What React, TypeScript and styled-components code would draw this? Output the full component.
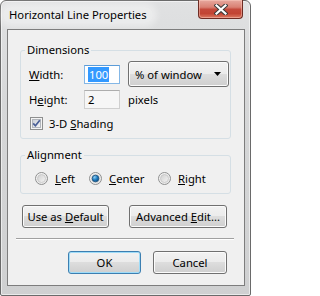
import React from "react";
import styled, { createGlobalStyle, css } from "styled-components";

const GlobalStyle = createGlobalStyle`
  html, body {
    margin: 0;
    padding: 0;
    background: #ffffff;
  }
  body {
    font-family: "Noto Sans", "Segoe UI", sans-serif;
    font-size: 11.25px;
    color: #000;
  }
  * {
    box-sizing: border-box;
  }
`;

const CheckBoxIcon = () => (
  <svg width="13" height="13" viewBox="0 0 13 13">
    <defs>
      <linearGradient id="cbInner" x1="0" y1="0" x2="1" y2="1">
        <stop offset="0" stopColor="#cbcfd5" />
        <stop offset="1" stopColor="#f7f7f7" />
      </linearGradient>
    </defs>
    <rect x="0.5" y="0.5" width="12" height="12" fill="#f4f4f4" stroke="#8e8f8f" />
    <rect x="2.5" y="2.5" width="8" height="8" fill="url(#cbInner)" stroke="#b2b6bc" />
    <path d="M3.2 6.4 L5.4 8.8 L9.8 3.2" fill="none" stroke="#4a5f97" strokeWidth="1.7" />
  </svg>
);

const RadioIcon = ({ checked }: { checked?: boolean }) => (
  <svg width="13" height="13" viewBox="0 0 13 13">
    <defs>
      <linearGradient id="rdOuter" x1="0" y1="0" x2="1" y2="1">
        <stop offset="0" stopColor="#f6f6f6" />
        <stop offset="1" stopColor="#e6e6e6" />
      </linearGradient>
      <linearGradient id="rdInner" x1="0" y1="0" x2="1" y2="1">
        <stop offset="0" stopColor="#cfcfcf" />
        <stop offset="1" stopColor="#f5f5f5" />
      </linearGradient>
      <radialGradient id="rdDot" cx="0.35" cy="0.3" r="0.75">
        <stop offset="0" stopColor="#8fd0f5" />
        <stop offset="0.55" stopColor="#1f7cc0" />
        <stop offset="1" stopColor="#0c4f82" />
      </radialGradient>
    </defs>
    <circle cx="6.5" cy="6.5" r="6" fill="url(#rdOuter)" stroke="#8e8f8f" />
    <circle cx="6.5" cy="6.5" r="4" fill="url(#rdInner)" stroke="#c4c4c4" strokeWidth="0.8" />
    {checked && <circle cx="6.5" cy="6.5" r="3.3" fill="url(#rdDot)" stroke="#19517f" strokeWidth="0.8" />}
  </svg>
);

const App = () => {
  return (
    <>
      <GlobalStyle />
      <Window>
        <TitleBar>
          <TitleText>Horizontal Line Properties</TitleText>
          <CloseButton>
            <svg width="14" height="11" viewBox="0 0 14 11">
              <path d="M2.5 1.5 L11.5 9.5 M11.5 1.5 L2.5 9.5" stroke="#3a3a3a" strokeWidth="4.2" strokeLinecap="square" />
              <path d="M2.5 1.5 L11.5 9.5 M11.5 1.5 L2.5 9.5" stroke="#ffffff" strokeWidth="2.2" strokeLinecap="square" />
            </svg>
          </CloseButton>
        </TitleBar>

        <Client>
          <Group $top={13}>
            <Legend>Dimensions</Legend>
            <DimGrid>
              <FieldLabel>
                <Key>W</Key>idth:
              </FieldLabel>
              <TextBox $focused>
                <Selection>100</Selection>
              </TextBox>
              <Combo>
                <span>% of window</span>
                <svg width="7" height="4" viewBox="0 0 7 4">
                  <polygon points="0,0 7,0 3.5,4" fill="#000" />
                </svg>
              </Combo>
              <FieldLabel>
                H<Key>e</Key>ight:
              </FieldLabel>
              <TextBox>2</TextBox>
              <FieldLabel>pixels</FieldLabel>
            </DimGrid>
            <CheckRow>
              <CheckBoxIcon />
              <span>
                3-D <Key>S</Key>hading
              </span>
            </CheckRow>
          </Group>

          <Group $top={9} $bottom={9} $padTop={9}>
            <Legend>Alignment</Legend>
            <RadioRow>
              <RadioItem>
                <RadioIcon />
                <span>
                  <Key>L</Key>eft
                </span>
              </RadioItem>
              <RadioItem>
                <RadioIcon checked />
                <span>
                  <Key>C</Key>enter
                </span>
              </RadioItem>
              <RadioItem>
                <RadioIcon />
                <span>
                  <Key>R</Key>ight
                </span>
              </RadioItem>
            </RadioRow>
          </Group>

          <ButtonRow>
            <Button $w={87}>
              <span>
                Use as <Key>D</Key>efault
              </span>
            </Button>
            <Button $w={98}>
              <span>
                Advanced <Key>E</Key>dit...
              </span>
            </Button>
          </ButtonRow>

          <Separator />

          <FooterRow>
            <Button $w={73} $default>
              <span>OK</span>
            </Button>
            <Button $w={74}>
              <span>Cancel</span>
            </Button>
          </FooterRow>
        </Client>
      </Window>
    </>
  );
};

export default App;

const Window = styled.div`
  display: flex;
  flex-direction: column;

  width: 251px;
  height: 296px;
  padding: 0 5px 9px 6px;

  border: 1px solid #6a6a6a;
  border-radius: 6px 6px 2px 2px;
  background: linear-gradient(180deg, #e0e1e2 0%, #d6d7d8 35%, #cfd0d1 100%);
  box-shadow: inset 0 0 0 1px rgba(255, 255, 255, 0.55);
`;

const TitleBar = styled.div`
  display: flex;
  align-items: flex-start;

  height: 28px;
`;

const TitleText = styled.div`
  margin: 6px 0 0 -4px;
  padding: 0 6px;

  line-height: 16px;
  font-size: 11.25px;
  white-space: nowrap;

  border-radius: 10px;
  background: rgba(255, 255, 255, 0.38);
  box-shadow: 0 0 6px 4px rgba(255, 255, 255, 0.38);
`;

const CloseButton = styled.div`
  display: flex;
  justify-content: center;
  align-items: center;

  width: 45px;
  height: 19px;
  margin: -1px 2px 0 auto;

  border: 1px solid #6e2b23;
  border-top: none;
  border-radius: 0 0 4px 4px;
  background: linear-gradient(
    180deg,
    #e7a99f 0%,
    #d98073 40%,
    #c4493b 52%,
    #c24433 75%,
    #dc7a62 100%
  );
  box-shadow: inset 0 0 0 1px rgba(255, 210, 200, 0.45);
`;

const Client = styled.div`
  display: flex;
  flex-direction: column;
  flex: 1;

  border: 1px solid #7d7d7d;
  background: #f0f0f0;
`;

const Group = styled.fieldset<{ $top: number; $bottom?: number; $padTop?: number }>`
  min-width: 0;
  margin: ${({ $top }) => $top}px 13px 0 12px;
  padding: ${({ $padTop }) => $padTop ?? 4}px 0 ${({ $bottom }) => $bottom ?? 8}px 0;

  border: 1px solid #d5dfe5;
  border-radius: 3px;
`;

const Legend = styled.legend`
  margin-left: 4px;
  padding: 0 2px;

  line-height: 14px;
`;

const DimGrid = styled.div`
  display: grid;
  grid-template-columns: 47px 36px 101px;
  grid-template-rows: 26px 19px;
  column-gap: 8px;
  row-gap: 3px;
  align-items: center;

  padding-left: 8px;
`;

const FieldLabel = styled.span`
  line-height: 15px;
  white-space: nowrap;
`;

const Key = styled.span`
  text-decoration: underline;
  text-underline-offset: 1px;
`;

const TextBox = styled.div<{ $focused?: boolean }>`
  display: flex;
  align-items: center;

  width: 36px;
  height: 19px;
  padding-left: 3px;

  border: 1px solid ${({ $focused }) => ($focused ? "#84b7e6" : "#cfcfcf")};
  border-top-color: ${({ $focused }) => ($focused ? "#5c9cd8" : "#adadad")};
  background: ${({ $focused }) => ($focused ? "#ffffff" : "#f6f6f6")};
`;

const Selection = styled.span`
  padding: 0 1px;

  line-height: 15px;
  color: #ffffff;
  background: #3399ff;
`;

const Combo = styled.div`
  display: flex;
  justify-content: space-between;
  align-items: center;

  width: 101px;
  height: 26px;
  padding: 0 7px 0 6px;

  border: 1px solid #707070;
  border-radius: 3px;
  background: linear-gradient(180deg, #f2f2f2 0%, #ebebeb 50%, #dddddd 50%, #cfcfcf 100%);
  box-shadow: inset 0 0 0 1px #fbfbfb;
`;

const CheckRow = styled.div`
  display: flex;
  align-items: center;
  gap: 6px;

  height: 13px;
  margin-top: 8px;
  padding-left: 9px;

  line-height: 15px;
`;

const RadioRow = styled.div`
  display: grid;
  grid-template-columns: 54px 69px auto;
  align-items: center;

  height: 13px;
  padding-left: 14px;
`;

const RadioItem = styled.div`
  display: flex;
  align-items: center;
  gap: 7px;

  line-height: 15px;
`;

const ButtonRow = styled.div`
  display: flex;
  justify-content: space-between;

  margin-top: 11px;
  padding: 0 17px 0 14px;
`;

const FooterRow = styled.div`
  display: flex;
  justify-content: flex-end;
  gap: 12px;

  margin-top: 11px;
  padding-right: 17px;
`;

const Separator = styled.div`
  margin: 10px 10px 0 8px;

  border-top: 1px solid #a0a0a0;
  border-bottom: 1px solid #ffffff;
`;

const Button = styled.div<{ $w: number; $default?: boolean }>`
  display: flex;
  justify-content: center;
  align-items: center;

  width: ${({ $w }) => $w}px;
  height: 23px;

  line-height: 15px;
  white-space: nowrap;

  border: 1px solid #707070;
  border-radius: 3px;
  background: linear-gradient(180deg, #f2f2f2 0%, #ebebeb 50%, #dddddd 50%, #cfcfcf 100%);
  box-shadow: inset 0 0 0 1px #fbfbfb;

  ${({ $default }) =>
    $default &&
    css`
      border-color: #3c7fb1;
      box-shadow: inset 0 0 0 1px #9fdcf8;
    `}
`;
